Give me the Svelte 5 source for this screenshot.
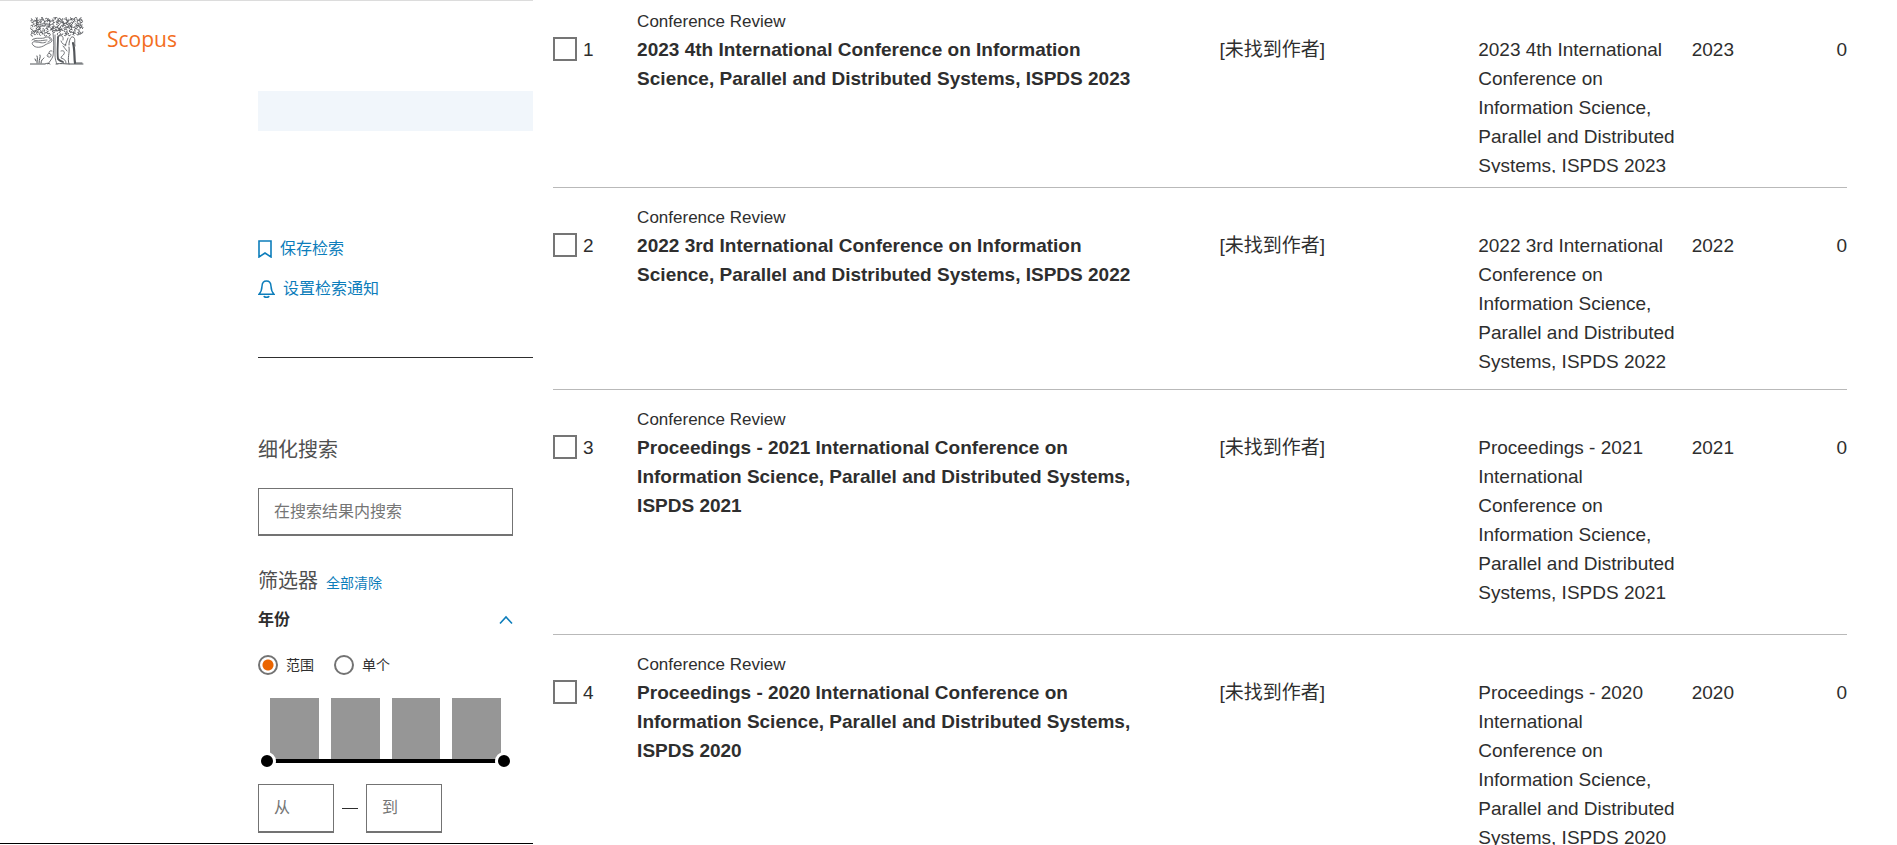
<script>
  const documents = [
    {
      id: 1,
      title: '2023 4th International Conference on Information Science, Parallel and Distributed Systems, ISPDS 2023',
      source: '2023 4th International Conference on Information Science, Parallel and Distributed Systems, ISPDS 2023',
      year: 2023,
      cited: 0
    },
    {
      id: 2,
      title: '2022 3rd International Conference on Information Science, Parallel and Distributed Systems, ISPDS 2022',
      source: '2022 3rd International Conference on Information Science, Parallel and Distributed Systems, ISPDS 2022',
      year: 2022,
      cited: 0
    },
    {
      id: 3,
      title: 'Proceedings - 2021 International Conference on Information Science, Parallel and Distributed Systems, ISPDS 2021',
      source: 'Proceedings - 2021 International Conference on Information Science, Parallel and Distributed Systems, ISPDS 2021',
      year: 2021,
      cited: 0,
      tall: true
    },
    {
      id: 4,
      title: 'Proceedings - 2020 International Conference on Information Science, Parallel and Distributed Systems, ISPDS 2020',
      source: 'Proceedings - 2020 International Conference on Information Science, Parallel and Distributed Systems, ISPDS 2020',
      year: 2020,
      cited: 0
    }
  ];

  const years = [
    { year: 2020, count: 1 },
    { year: 2021, count: 1 },
    { year: 2022, count: 1 },
    { year: 2023, count: 1 }
  ];
  const maxCount = Math.max(...years.map((y) => y.count));

  let mode = $state('range');
  let from = $state(2020);
  let to = $state(2023);

  // small curled leaves that fill the crown of the tree
  let seed = 7;
  const rand = () => {
    seed = (seed * 16807) % 2147483647;
    return seed / 2147483647;
  };
  const curl = (x, y) => {
    const a = rand() * Math.PI * 2;
    const r = 1 + rand() * 0.6;
    const dx = Math.cos(a) * r;
    const dy = Math.sin(a) * r;
    return `M${(x - dx).toFixed(1)} ${(y - dy).toFixed(1)}A${r.toFixed(1)} ${r.toFixed(1)} 0 1 1 ${(x + dx).toFixed(1)} ${(y + dy).toFixed(1)}`;
  };
  let leaves = '';
  for (let y = 2; y < 19; y += 2.5) {
    for (let x = 2; x < 53; x += 2.7) {
      if (y > 16 && x > 20 && x < 28) continue;
      leaves += curl(x + rand() * 2 - 1, y + rand() * 2 - 1);
    }
  }
</script>

<div class="page">
  <aside class="sidebar">
    <header class="header">
      <svg class="logo" viewBox="0 0 54 48" aria-hidden="true">
        <g fill="none" stroke="#53565a" stroke-linecap="round">
          <path stroke-width=".9" d={leaves} />
          <path stroke-width=".8" d="M2 23c3-3 8-1 12-2 4-2 7-1 8 2 0 3-4 3-7 5-4 3-10 3-12 0-2-2 0-4 3-3 3 0 7 2 10 0M4 23c4 2 9 0 13 0M19 21c2 1 2 3-1 4" />
          <path stroke-width=".8" d="M23 16c1 9 1 16 0 23-1 3-3 5-5 8M25 18v20c0 4 1 7 2 9M18 39c-2-4 4-3 3 0-1 2-3 1-4 0M22 34c-3-1-4 2-2 3" />
          <path stroke-width="1.8" d="M28 20c0 8-1 15 0 22 2 2 3 2 5 3" />
          <path stroke-width=".8" d="M28 20c3-3 6-1 5 3M31 24c1 3 3 4 5 4M31 34c3-1 4 1 3 3s-3 2-3 4c3 1 5 2 5 5M38 21l-3 8M33 29l4 5" />
          <path stroke-width=".9" d="M39 28c0-5 2-9 4-8 3 1 1 6 2 9M39 30c1 6-2 11 0 17" />
          <path stroke-width="2.200" d="M43 26c2 7 1 14 2 20" />
          <path stroke-width="1" d="M0 47h15c2-1 4-1 5 0M26 47c5-1 9 0 13 0h14M46 46h6M7 46c0-3 1-5 0-7M9 46c0-4 2-6 1-8M11 46c0-3 2-4 3-5M6 44l-1-2" />
        </g>
      </svg>
      <span class="brand">Scopus</span>
    </header>

    <div class="panel">
      <div class="banner"></div>

      <div class="actions">
        <button class="link" type="button">
          <svg width="14" height="18" viewBox="0 0 14 18" aria-hidden="true">
            <path d="M1 1h12v16l-6-4-6 4z" fill="none" stroke="currentColor" stroke-width="1.6" />
          </svg>
          保存检索
        </button>
        <button class="link" type="button">
          <svg width="17" height="18" viewBox="0 0 17 18" aria-hidden="true">
            <path d="M1 14.200h15c-2-2-2.800-4-3-8C12.800 2.500 11.500 1 8.500 1S4.200 2.500 4 6.200C3.800 10.200 3 12.200 1 14.200z" fill="none" stroke="currentColor" stroke-width="1.500" />
            <path d="M6 16c.5 1.800 4.500 1.800 5 0" fill="none" stroke="currentColor" stroke-width="1.600" />
          </svg>
          设置检索通知
        </button>
      </div>

      <hr class="divider" />

      <div class="filters">
        <h2 class="heading"><label for="refine">细化搜索</label></h2>
        <input id="refine" class="box search" type="text" placeholder="在搜索结果内搜索" />

        <div class="filter-head">
          <h2 class="heading">筛选器</h2>
          <button class="link small" type="button">全部清除</button>
        </div>

        <button class="facet" type="button" aria-expanded="true">
          年份
          <svg width="14" height="10" viewBox="0 0 14 10" aria-hidden="true">
            <path d="M1 8.500l6-6.500 6 6.500" fill="none" stroke="#0c7dbb" stroke-width="1.600" />
          </svg>
        </button>

        <div class="modes">
          <label class="mode"><input type="radio" value="range" bind:group={mode} />范围</label>
          <label class="mode"><input type="radio" value="single" bind:group={mode} />单个</label>
        </div>

        <div class="histogram">
          <div class="bars">
            {#each years as y (y.year)}
              <div class="bar" style="height: {(y.count / maxCount) * 100}%"></div>
            {/each}
          </div>
          <div class="slider">
            <input type="range" min="2020" max="2023" bind:value={from} aria-label="从" />
            <input type="range" min="2020" max="2023" bind:value={to} aria-label="到" />
          </div>
        </div>

        <div class="years">
          <input class="box" type="text" placeholder="从" aria-label="从" />
          <span class="dash"></span>
          <input class="box" type="text" placeholder="到" aria-label="到" />
        </div>
      </div>
    </div>
  </aside>

  <main class="results">
    <table>
      <colgroup>
        <col class="col-check" />
        <col class="col-title" />
        <col class="col-author" />
        <col class="col-source" />
        <col class="col-year" />
        <col />
      </colgroup>
      <tbody>
        {#each documents as doc (doc.id)}
          <tr class:tall={doc.tall}>
            <td>
              <label class="pick"><input type="checkbox" />{doc.id}</label>
            </td>
            <td class="title-cell">
              <div class="type">Conference Review</div>
              <a class="title" href="#doc-{doc.id}">{doc.title}</a>
            </td>
            <td>[未找到作者]</td>
            <td class="source-cell"><div class="source">{doc.source}</div></td>
            <td>{doc.year}</td>
            <td class="cited">{doc.cited}</td>
          </tr>
        {/each}
      </tbody>
    </table>
  </main>
</div>

<style>
  :global(body) {
    background: #fff;
  }

  .page {
    display: flex;
    align-items: flex-start;
    height: 100vh;
    overflow: hidden;
    color: #2e2e2e;
    font-family: 'Liberation Sans', 'Noto Sans CJK SC', sans-serif;
  }

  .sidebar {
    box-sizing: border-box;
    flex: 0 0 533px;
    padding-bottom: 10px;
    border-top: 1px solid #dcdcdc;
    border-bottom: 1px solid #000;
  }

  .header {
    box-sizing: border-box;
    display: flex;
    align-items: flex-start;
    gap: 23px;
    height: 90px;
    padding: 16px 30px;
  }

  .logo {
    width: 54px;
    height: 48px;
  }

  .brand {
    color: #f36d21;
    font-family: 'Open Sans', sans-serif;
    font-size: 21px;
    line-height: 44px;
  }

  .panel {
    margin-left: 258px;
  }

  .banner {
    height: 40px;
    background: #f1f6fb;
  }

  .actions {
    display: flex;
    flex-direction: column;
    align-items: flex-start;
    gap: 16px;
    padding: 106px 0 56px;
  }

  button {
    padding: 0;
    border: 0;
    background: none;
    font-family: inherit;
    cursor: pointer;
  }

  .link {
    display: flex;
    align-items: center;
    gap: 8px;
    color: #0c7dbb;
    font-size: 16px;
    line-height: 24px;
  }

  .small {
    font-size: 14px;
    line-height: 26px;
  }

  .divider {
    height: 1px;
    margin: 0;
    border: 0;
    background: #2e2e2e;
  }

  .filters {
    padding: 77px 20px 0 0;
  }

  .heading {
    margin: 0;
    color: #505050;
    font-size: 20px;
    font-weight: 400;
    line-height: 30px;
  }

  .box {
    box-sizing: border-box;
    width: 76px;
    height: 49px;
    padding: 0 15px;
    border: 1px solid #737373;
    border-bottom-width: 2px;
    color: #2e2e2e;
    font-family: inherit;
    font-size: 16px;
    line-height: 24px;
  }

  .box::placeholder {
    color: #757575;
    opacity: 1;
  }

  .search {
    display: block;
    width: 100%;
    height: 48px;
    margin-top: 23px;
  }

  .filter-head {
    display: flex;
    align-items: flex-end;
    gap: 8px;
    margin-top: 30px;
  }

  .facet {
    display: flex;
    align-items: center;
    justify-content: space-between;
    width: 100%;
    margin-top: 12px;
    color: #2e2e2e;
    font-size: 16px;
    font-weight: 700;
    line-height: 24px;
  }

  .modes {
    display: flex;
    gap: 20px;
    margin-top: 23px;
  }

  .mode {
    display: flex;
    align-items: center;
    gap: 8px;
    font-size: 14px;
    line-height: 20px;
  }

  .mode input {
    appearance: none;
    box-sizing: border-box;
    width: 20px;
    height: 20px;
    margin: 0;
    border: 2px solid #737373;
    border-radius: 50%;
  }

  .mode input:checked {
    background: radial-gradient(circle, #eb6500 5px, #fff 6px);
  }

  .histogram {
    margin-top: 23px;
  }

  .bars {
    display: flex;
    align-items: flex-end;
    gap: 12px;
    height: 61px;
    padding: 0 12px;
  }

  .bar {
    flex: 1;
    background: #969696;
  }

  .slider {
    display: grid;
    grid-template-rows: 4px;
    align-items: center;
    height: 4px;
    background: linear-gradient(#000, #000) center / calc(100% - 20px) 4px no-repeat;
  }

  .slider input {
    appearance: none;
    grid-area: 1 / 1;
    width: 100%;
    height: 18px;
    margin: 0;
    background: none;
    pointer-events: none;
  }

  .slider input::-webkit-slider-thumb {
    appearance: none;
    box-sizing: border-box;
    width: 18px;
    height: 18px;
    border: 3px solid #fff;
    border-radius: 50%;
    background: #000;
    pointer-events: auto;
  }

  .years {
    display: flex;
    align-items: center;
    gap: 8px;
    margin-top: 21px;
  }

  .dash {
    width: 16px;
    height: 1px;
    background: #2e2e2e;
  }

  .results {
    flex: 1;
    min-width: 0;
    padding: 0 50px 0 20px;
  }

  table {
    width: 100%;
    border-collapse: separate;
    border-spacing: 0;
    table-layout: fixed;
    font-size: 19px;
    line-height: 29px;
  }

  .col-check {
    width: 6.5%;
  }

  .col-title {
    width: 45%;
  }

  .col-author {
    width: 20%;
  }

  .col-source {
    width: 16.5%;
  }

  .col-year {
    width: 7%;
  }

  td {
    padding: 43px 0 13px;
    border-bottom: 1px solid #b9b9b9;
    vertical-align: top;
  }

  .title-cell {
    padding-top: 17px;
    padding-right: 66px;
  }

  .source-cell {
    padding-right: 12px;
  }

  .tall td {
    padding-bottom: 27px;
  }

  tr:first-child td {
    padding-top: 35px;
    padding-bottom: 14px;
  }

  tr:first-child .title-cell {
    padding-top: 9px;
  }

  tr:first-child .source {
    height: 138px;
    overflow: hidden;
  }

  .pick {
    display: flex;
    align-items: center;
    gap: 6px;
    height: 28px;
  }

  .pick input {
    appearance: none;
    box-sizing: border-box;
    width: 24px;
    height: 24px;
    margin: 0;
    border: 2px solid #757575;
    background: #fff;
  }

  .type {
    font-size: 17px;
    line-height: 26px;
  }

  .title {
    display: block;
    color: #2e2e2e;
    font-weight: 700;
    text-decoration: none;
  }

  .cited {
    text-align: right;
  }
</style>
